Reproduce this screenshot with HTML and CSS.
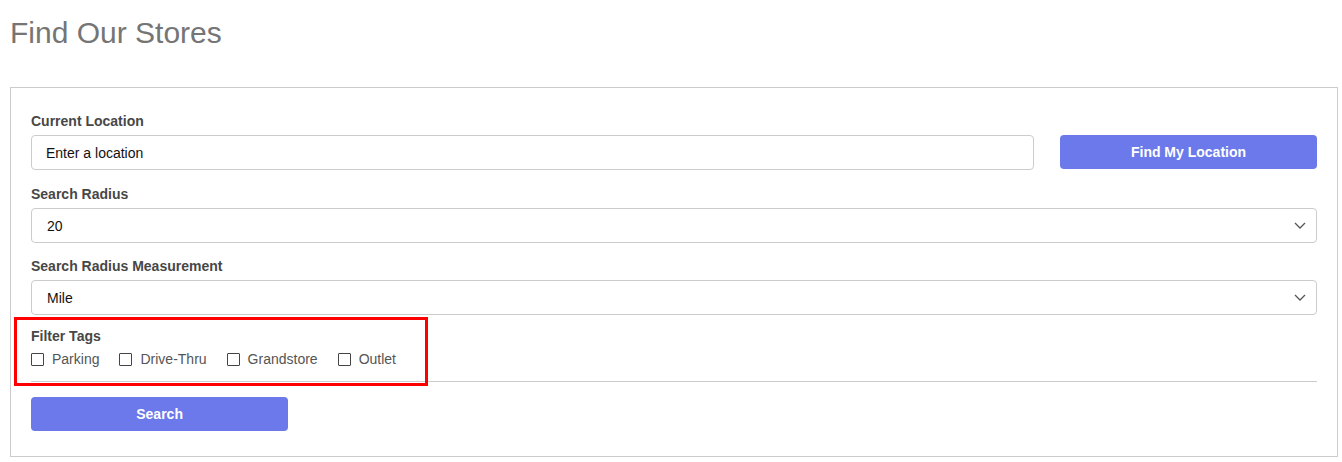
FILE: index.html
```html
<html lang="en">
<head>
  <meta charset="UTF-8">
  <meta name="viewport" content="width=device-width, initial-scale=1.0">
  <title>Find Our Stores</title>
  <link rel="stylesheet" href="styles.css">
</head>
<body>
  <h1 class="page-title">Find Our Stores</h1>

  <div class="finder">
    <div class="form-group form-group-location">
      <label class="field-label" for="location">Current Location</label>
      <div class="location-row">
        <input type="text" id="location" class="field" value="Enter a location">
        <button class="btn">Find My Location</button>
      </div>
    </div>

    <div class="form-group">
      <label class="field-label" for="radius">Search Radius</label>
      <div class="select-wrap">
        <select id="radius" class="field">
          <option>20</option>
        </select>
        <svg class="chevron" width="12" height="7" viewBox="0 0 12 7"><path d="M1 1l5 5 5-5" fill="none" stroke="#555" stroke-width="1.3"/></svg>
      </div>
    </div>

    <div class="form-group">
      <label class="field-label" for="measure">Search Radius Measurement</label>
      <div class="select-wrap">
        <select id="measure" class="field">
          <option>Mile</option>
        </select>
        <svg class="chevron" width="12" height="7" viewBox="0 0 12 7"><path d="M1 1l5 5 5-5" fill="none" stroke="#555" stroke-width="1.3"/></svg>
      </div>
    </div>

    <div class="tags">
      <div class="field-label">Filter Tags</div>
      <div class="tag-list">
        <label class="tag"><input type="checkbox"> Parking</label>
        <label class="tag"><input type="checkbox"> Drive-Thru</label>
        <label class="tag"><input type="checkbox"> Grandstore</label>
        <label class="tag"><input type="checkbox"> Outlet</label>
      </div>
      <!-- highlight box around the tags -->
      <div class="highlight"></div>
    </div>

    <hr class="divider">

    <button class="btn btn-search">Search</button>
  </div>
</body>
</html>
```

FILE: styles.css
```css
* {
  box-sizing: border-box;
}

body {
  margin: 0;
  padding: 0 4px 0 10px;
  font-family: "Liberation Sans", Arial, sans-serif;
  background: #fff;
}

.page-title {
  margin: 16px 0 38px;
  font-size: 30px;
  line-height: 33px;
  font-weight: normal;
  color: #757575;
}

.finder {
  border: 1px solid #ccc;
  padding: 24px 20px 25px;
}

.form-group {
  margin-bottom: 14px;
}

.form-group-location {
  margin-bottom: 15px;
}

.field-label {
  display: block;
  font-size: 14px;
  line-height: 18px;
  font-weight: bold;
  color: #474747;
  margin-bottom: 5px;
}

.location-row {
  display: grid;
  grid-template-columns: 1fr 257px;
  column-gap: 26px;
}

.field {
  display: block;
  width: 100%;
  height: 35px;
  padding: 0 14px;
  font-family: "Liberation Sans", Arial, sans-serif;
  font-size: 14px;
  color: #111;
  background: #fff;
  border: 1px solid #ccc;
  border-radius: 4px;
  outline: none;
}

select.field {
  -webkit-appearance: none;
  appearance: none;
  padding-left: 15px;
}

.select-wrap {
  position: relative;
}

.chevron {
  position: absolute;
  right: 11px;
  top: 14px;
  pointer-events: none;
}

.btn {
  height: 34px;
  border: none;
  border-radius: 4px;
  background-color: #6b79ea;
  color: #fff;
  font-family: "Liberation Sans", Arial, sans-serif;
  font-size: 14px;
  font-weight: bold;
  cursor: pointer;
}

.tags {
  position: relative;
  margin-top: -2px;
}

.tags .field-label {
  margin-bottom: 4px;
}

.tag-list {
  display: flex;
  column-gap: 20px;
}

.tag {
  display: flex;
  align-items: center;
  font-size: 14px;
  line-height: 20px;
  color: #555;
}

.tag input {
  -webkit-appearance: none;
  appearance: none;
  width: 13px;
  height: 13px;
  margin: 0 8px 0 0;
  border: 1px solid #444;
  border-radius: 1px;
  background: #fff;
}

.highlight {
  position: absolute;
  left: -17px;
  top: -10px;
  width: 414px;
  height: 69px;
  border: 3px solid #f00;
}

.divider {
  margin: 12px 0 15px;
  border: none;
  border-top: 1px solid #ccc;
}

.btn-search {
  width: 20%;
  display: block;
}
```
